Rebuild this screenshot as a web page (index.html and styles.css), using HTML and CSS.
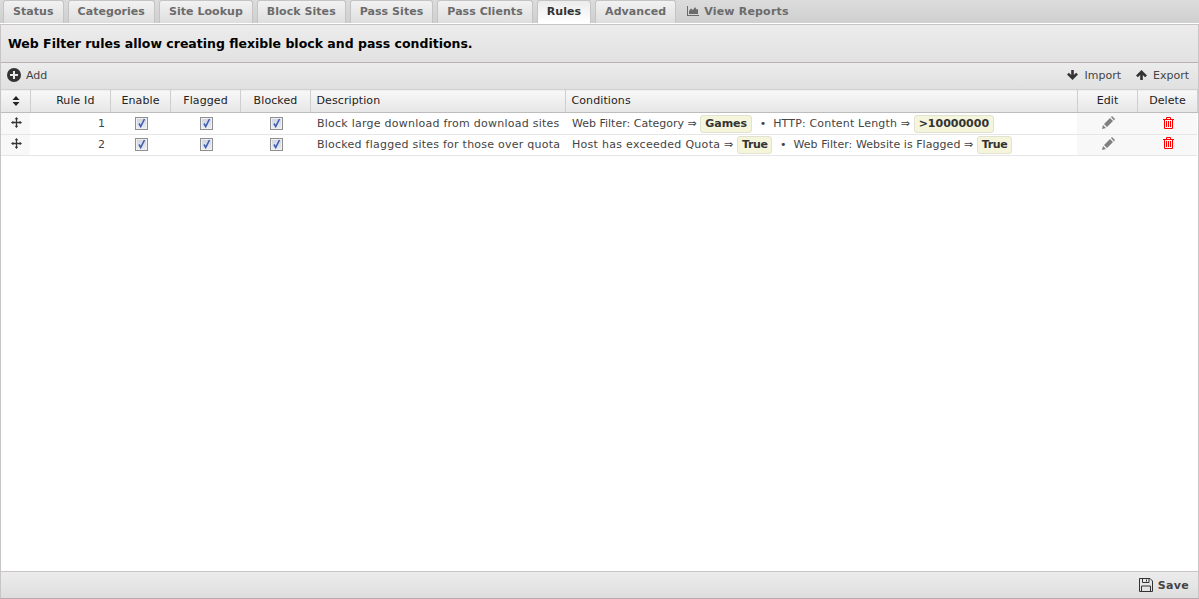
FILE: index.html
```html
<!DOCTYPE html>
<html lang="en">
<head>
<meta charset="utf-8">
<title>Web Filter Rules</title>
<link rel="stylesheet" href="styles.css">
</head>
<body>
<div class="app">
  <nav class="tabs">
    <a class="tab">Status</a>
    <a class="tab">Categories</a>
    <a class="tab">Site Lookup</a>
    <a class="tab">Block Sites</a>
    <a class="tab">Pass Sites</a>
    <a class="tab">Pass Clients</a>
    <a class="tab active">Rules</a>
    <a class="tab">Advanced</a>
    <a class="tab plain"><svg class="ico-chart" viewBox="0 0 12 10"><path d="M0 0h1v9h11v1H0z"/><path d="M2 8V5l2-2.500L6 4l2-3 1.500 2.500L11 3v5z"/></svg>View Reports</a>
  </nav>
  <section class="panel">
    <header class="intro">Web Filter rules allow creating flexible block and pass conditions.</header>
    <div class="toolbar">
      <span class="tool"><svg class="ico-add" viewBox="0 0 14 14"><circle cx="7" cy="7" r="7"/><path class="cut" d="M6 3h2v3h3v2H8v3H6V8H3V6h3z"/></svg>Add</span>
      <span class="spacer"></span>
      <span class="tool"><svg class="ico-arrow" viewBox="0 0 11 10"><path d="M4.200 0h2.600v5l2.300-2.300L11 4.500 5.500 10 0 4.500l1.900-1.800 2.300 2.300z"/></svg>Import</span>
      <span class="tool"><svg class="ico-arrow" viewBox="0 0 11 10"><path d="M4.200 10h2.600V5l2.300 2.300L11 5.500 5.500 0 0 5.500l1.900 1.800 2.300-2.300z"/></svg>Export</span>
    </div>
    <div class="grid-wrap">
      <table class="grid">
        <colgroup>
          <col class="c-drag"><col class="c-id"><col class="c-check"><col class="c-flag"><col class="c-flag">
          <col class="c-desc"><col class="c-cond"><col class="c-check"><col class="c-check">
        </colgroup>
        <thead>
          <tr>
            <th class="center"><svg class="ico-sort" viewBox="0 0 8 10"><path d="M4 0l3.500 4H.5zM4 10L.5 6h7z"/></svg></th>
            <th class="right head-id">Rule Id</th>
            <th class="center">Enable</th>
            <th class="center">Flagged</th>
            <th class="center">Blocked</th>
            <th>Description</th>
            <th>Conditions</th>
            <th class="center">Edit</th>
            <th class="center">Delete</th>
          </tr>
        </thead>
        <tbody>
          <tr>
            <td class="center shade"><svg class="ico-move" viewBox="0 0 12 12"><path d="M6 0l2 2.500H6.700v2.800h2.800V4L12 6 9.500 8V6.700H6.700v2.800H8L6 12 4 9.500h1.300V6.700H2.500V8L0 6l2.500-2v1.300h2.800V2.500H4z"/></svg></td>
            <td class="right">1</td>
            <td class="center"><span class="check"><svg viewBox="0 0 11 11"><path d="M3 5.500l1.700 3L8.500 1"/></svg></span></td>
            <td class="center"><span class="check"><svg viewBox="0 0 11 11"><path d="M3 5.500l1.700 3L8.500 1"/></svg></span></td>
            <td class="center"><span class="check"><svg viewBox="0 0 11 11"><path d="M3 5.500l1.700 3L8.500 1"/></svg></span></td>
            <td class="desc">Block large download from download sites</td>
            <td class="cond"><span class="seg-tight">Web Filter: Category ⇒</span> <b class="val">Games</b> <span class="dot">•</span> <span class="seg-mid">HTTP: Content Length ⇒</span> <b class="val">&gt;10000000</b></td>
            <td class="center shade"><svg class="ico-edit" viewBox="0 0 13 13"><path d="M0 13l1-4 3 3zM2 8l6-6 3 3-6 6zM9 1l1-1 3 3-1 1.500z"/></svg></td>
            <td class="center shade"><svg class="ico-trash" viewBox="0 0 11 12"><path d="M3.500 2.500V.5h4v2M0 2.500h11M1.500 2.500v9h8v-9M3.500 4v6M5.500 4v6M7.500 4v6"/></svg></td>
          </tr>
          <tr>
            <td class="center shade"><svg class="ico-move" viewBox="0 0 12 12"><path d="M6 0l2 2.500H6.700v2.800h2.800V4L12 6 9.500 8V6.700H6.700v2.800H8L6 12 4 9.500h1.300V6.700H2.500V8L0 6l2.500-2v1.300h2.800V2.500H4z"/></svg></td>
            <td class="right">2</td>
            <td class="center"><span class="check"><svg viewBox="0 0 11 11"><path d="M3 5.500l1.700 3L8.500 1"/></svg></span></td>
            <td class="center"><span class="check"><svg viewBox="0 0 11 11"><path d="M3 5.500l1.700 3L8.500 1"/></svg></span></td>
            <td class="center"><span class="check"><svg viewBox="0 0 11 11"><path d="M3 5.500l1.700 3L8.500 1"/></svg></span></td>
            <td class="desc">Blocked flagged sites for those over quota</td>
            <td class="cond"><span class="seg-wide">Host has exceeded Quota ⇒</span> <b class="val val-short">True</b> <span class="dot">•</span> <span class="seg-long">Web Filter: Website is Flagged ⇒</span> <b class="val val-short">True</b></td>
            <td class="center shade"><svg class="ico-edit" viewBox="0 0 13 13"><path d="M0 13l1-4 3 3zM2 8l6-6 3 3-6 6zM9 1l1-1 3 3-1 1.500z"/></svg></td>
            <td class="center shade"><svg class="ico-trash" viewBox="0 0 11 12"><path d="M3.500 2.500V.5h4v2M0 2.500h11M1.500 2.500v9h8v-9M3.500 4v6M5.500 4v6M7.500 4v6"/></svg></td>
          </tr>
        </tbody>
      </table>
    </div>
    <footer class="footer">
      <span class="save"><svg class="ico-save" viewBox="0 0 14 14"><path d="M.5.500h10.500l2.500 2.500v10.500H.5zM3.500.5v4h6.500v-4M7.500 1.500v2M2.500 13.500V8h9v5.500"/></svg>Save</span>
    </footer>
  </section>
</div>
</body>
</html>
```

FILE: styles.css
```css
* { box-sizing: border-box; }
html, body { margin: 0; height: 100%; }
body {
  font-family: "DejaVu Sans", sans-serif;
  font-size: 11px;
  color: #333;
  background: #fff;
  overflow: hidden;
}
.app { display: flex; flex-direction: column; height: 599px; width: 1199px; }

.tabs {
  display: flex;
  gap: 4px;
  height: 23px;
  padding-left: 3px;
  flex: none;
  background: linear-gradient(#dcdcdc, #cfcfcf);
}
.tab {
  height: 23px;
  padding: 0 9px;
  line-height: 21px;
  font-size: 11px;
  font-weight: bold;
  letter-spacing: 0.05px;
  color: #6b6b6b;
  white-space: nowrap;
  background: linear-gradient(#f2f2f2, #dedede);
  border: 1px solid #c4c4c4;
  border-bottom: 0;
  border-radius: 3px 3px 0 0;
}
.tab.active { color: #333; background: linear-gradient(#ececec, #fff); }
.tab.plain { display: flex; align-items: center; background: none; border-color: transparent; gap: 5px; line-height: 1; padding: 0 9px 2px 6px; letter-spacing: 0.2px; }
.ico-chart { width: 12px; height: 10px; fill: #6b6b6b; }

.panel {
  flex: 1;
  min-height: 0;
  display: flex;
  flex-direction: column;
  margin-top: 1px;
  border: 1px solid #c9c4c6;
  border-bottom-color: #b9a9ae;
}
.intro {
  flex: none;
  height: 38px;
  padding-left: 7px;
  line-height: 37px;
  font-size: 12.5px;
  font-weight: bold;
  color: #000;
  background: linear-gradient(#ececec, #e2e2e2);
  border-bottom: 1px solid #bcaeb2;
}
.toolbar {
  flex: none;
  height: 26px;
  display: flex;
  align-items: center;
  gap: 15px;
  padding: 0 9px 2px 6px;
  background: linear-gradient(#ececec, #e0e0e0);
}
.spacer { flex: 1; }
.tool { display: flex; align-items: center; gap: 5px; color: #444; }
.ico-add { width: 14px; height: 14px; fill: #333; }
.ico-add .cut { fill: #e8e8e8; }
.ico-arrow { width: 11px; height: 10px; fill: #333; margin-right: 1px; }

.grid-wrap { flex: 1; min-height: 0; background: #fff; }
.grid { width: 1196px; table-layout: fixed; border-collapse: collapse; }
.c-drag { width: 29px; }
.c-id { width: 80px; }
.c-check { width: 60px; }
.c-flag { width: 70px; }
.c-desc { width: 255px; }
.c-cond { width: 512px; }
.grid th {
  height: 23px;
  padding: 0 6px 2px;
  font-weight: normal;
  font-size: 11px;
  color: #222;
  text-align: left;
  background: linear-gradient(#f8f8f8, #e6e6e6);
  border-top: 1px solid #d0d0d0;
  border-bottom: 1px solid #bdbdbd;
  border-right: 1px solid #cfcfcf;
  letter-spacing: 0.1px;
}
.grid th.center { text-align: center; padding-left: 7px; padding-right: 6px; }
.grid th.right { text-align: right; }
.grid th.head-id { padding-right: 15px; }
.grid td {
  height: 21px;
  padding: 0 6px 0 7px;
  font-size: 11px;
  color: #444;
  white-space: nowrap;
  border-bottom: 1px solid #e6e6e6;
}
.grid tbody tr:first-child td { height: 22px; }
.grid tbody tr:last-child td { padding-bottom: 2px; }
.grid tbody tr:last-child td.cond { padding-bottom: 0; }
.grid td.center { text-align: center; padding-left: 8px; padding-right: 5px; }
.grid td.right { text-align: right; padding-right: 5px; }
.grid td.shade { background: #f8f8f8; padding-left: 2px; padding-right: 0; }
.desc { letter-spacing: 0.245px; }
.seg-tight { letter-spacing: 0; }
.seg-long { letter-spacing: 0.06px; }
.seg-mid { letter-spacing: 0.17px; }
.seg-wide { letter-spacing: 0.29px; }
svg { vertical-align: middle; }
.ico-sort { display: inline-block; width: 8px; height: 10px; fill: #222; }
.ico-move { display: inline-block; width: 11px; height: 11px; fill: #333; margin-bottom: 2px; }
.ico-edit { display: inline-block; width: 13px; height: 13px; fill: #808080; margin-bottom: 2px; }
.ico-trash { display: inline-block; width: 11px; height: 12px; fill: none; stroke: #f00; stroke-width: 1; margin-bottom: 2px; }
.check {
  display: inline-block;
  width: 13px;
  height: 13px;
  vertical-align: middle;
  background: linear-gradient(#cfd3e0, #eceef4);
  border: 1px solid #8f8f8f;
  box-shadow: inset 0 0 0 1px #f0f0f0;
}
.check svg { display: block; width: 11px; height: 11px; fill: none; stroke: #3f5fb0; stroke-width: 1.600; }
.val {
  display: inline-block;
  padding: 0 4px;
  line-height: 15px;
  height: 18px;
  font-weight: bold;
  color: #333;
  background: #f5f5dc;
  border: 1px solid #e2e2d0;
  border-radius: 3px;
}
.val-short { letter-spacing: -0.4px; }
.dot { margin: 0 3.5px 0 4px; }

.footer {
  flex: none;
  height: 27px;
  display: flex;
  align-items: center;
  justify-content: flex-end;
  padding-right: 9px;
  background: linear-gradient(#ececec, #dedede);
  border-top: 1px solid #c9c4c6;
}
.save { display: flex; align-items: center; gap: 5px; font-weight: bold; color: #444; letter-spacing: 0.3px; }
.ico-save { width: 14px; height: 14px; fill: none; stroke: #333; stroke-width: 1; }
```
